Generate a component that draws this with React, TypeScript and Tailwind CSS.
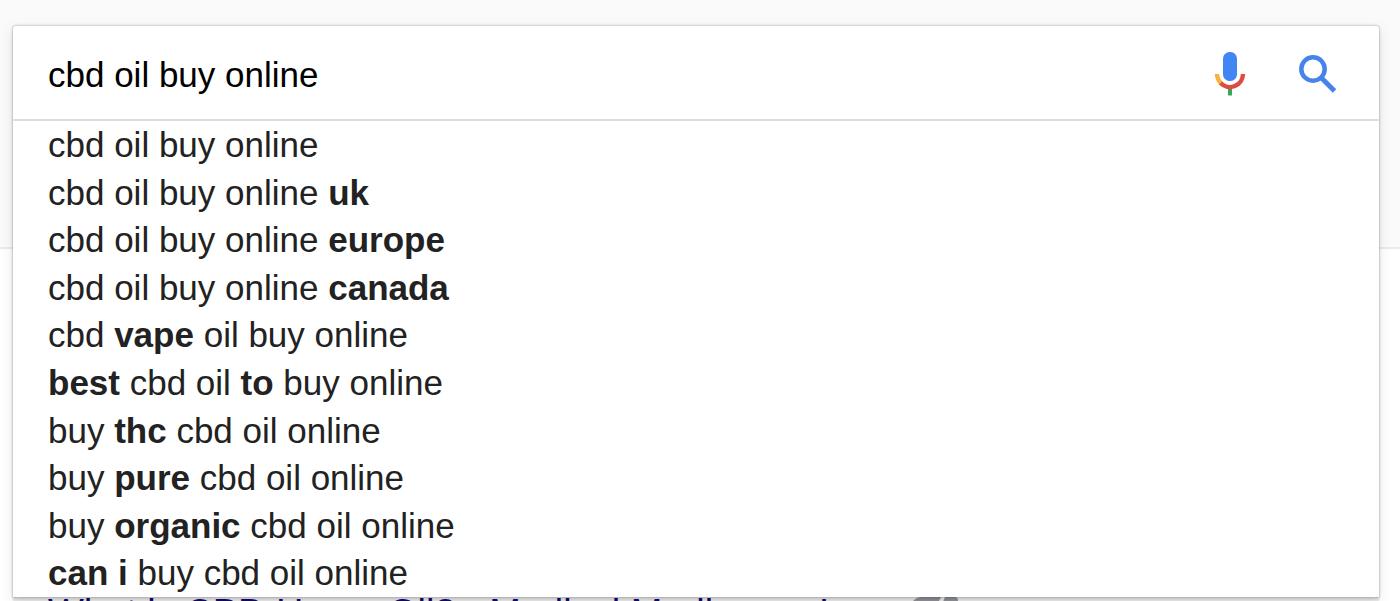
type Part = { text: string; bold?: boolean };

const query = "cbd oil buy online";

const suggestions: Part[][] = [
  [{ text: "cbd oil buy online" }],
  [{ text: "cbd oil buy online " }, { text: "uk", bold: true }],
  [{ text: "cbd oil buy online " }, { text: "europe", bold: true }],
  [{ text: "cbd oil buy online " }, { text: "canada", bold: true }],
  [{ text: "cbd " }, { text: "vape", bold: true }, { text: " oil buy online" }],
  [{ text: "best", bold: true }, { text: " cbd oil " }, { text: "to", bold: true }, { text: " buy online" }],
  [{ text: "buy " }, { text: "thc", bold: true }, { text: " cbd oil online" }],
  [{ text: "buy " }, { text: "pure", bold: true }, { text: " cbd oil online" }],
  [{ text: "buy " }, { text: "organic", bold: true }, { text: " cbd oil online" }],
  [{ text: "can i", bold: true }, { text: " buy cbd oil online" }],
];

function MicIcon() {
  return (
    <svg viewBox="0 0 32 44" className="h-[44px] w-[32px]" fill="none" aria-hidden="true">
      <rect x="9" y="0" width="14" height="29" rx="6.5" fill="#4285f4" />
      <path d="M16 36v7.500" stroke="#34a853" strokeWidth="4" />
      <path d="M3 22a13 13 0 0 0 4.400 9.500" stroke="#f4b43a" strokeWidth="4.400" />
      <path d="M6.600 31A13 13 0 0 0 29 22" stroke="#de4b40" strokeWidth="4.400" />
    </svg>
  );
}

function SearchIcon() {
  return (
    <svg viewBox="0 0 38 38" className="size-[38px]" fill="none" stroke="#4683ea" aria-hidden="true">
      <circle cx="14" cy="14" r="11.700" strokeWidth="4.500" />
      <path d="M23 23.500L35.500 36" strokeWidth="5" />
    </svg>
  );
}

function ResultBadge() {
  return (
    <svg viewBox="0 0 48 20" className="h-[20px] w-[48px]" fill="#9c9ca6" aria-hidden="true">
      <path d="M0 6C4 2 6 0 11 0H30L20 20H0Z" />
      <path d="M34 0H44Q47 0 47 4L40 20H26Z" />
    </svg>
  );
}

function SearchBox() {
  return (
    <form
      role="search"
      onSubmit={(e) => e.preventDefault()}
      className="flex h-[95px] items-center border-b-2 border-[#dcdcdc] pt-[2px] pr-[42px] pl-[35px]"
    >
      <input
        type="text"
        aria-label="Search"
        defaultValue={query}
        className="h-[50px] min-w-0 flex-1 bg-transparent pt-[2px] text-[35px] leading-[48px] text-black outline-none"
      />
      <button type="button" aria-label="Search by voice" className="mr-[53px] shrink-0">
        <MicIcon />
      </button>
      <button type="submit" aria-label="Search" className="shrink-0">
        <SearchIcon />
      </button>
    </form>
  );
}

function SuggestionList() {
  return (
    <ul className="grid h-[476px] auto-rows-fr px-[35px] text-[35px] leading-[47px] text-[#222]">
      {suggestions.map((parts, i) => (
        <li key={i} className="whitespace-pre">
          {parts.map((part, j) => (part.bold ? <b key={j}>{part.text}</b> : <span key={j}>{part.text}</span>))}
        </li>
      ))}
    </ul>
  );
}

export default function App() {
  return (
    <div className="relative h-screen overflow-hidden bg-white font-['Liberation_Sans',Arial,sans-serif]">
      <div className="h-[249px] border-b-2 border-[#ebebeb] bg-[#fafafa]" />

      {/* first result, mostly covered by the open suggestion panel */}
      <div className="absolute top-[591px] left-[48px] flex items-start gap-[42px] whitespace-nowrap">
        <a href="#result" className="text-[38px] leading-[44px] text-[#150a70]">
          What is CBD Hemp Oil? - Medical Marijuana, Inc
        </a>
        <div className="pt-[6px]">
          <ResultBadge />
        </div>
      </div>

      <main className="absolute inset-x-0 top-[26px] mr-[21px] ml-[13px] rounded-t-[3px] bg-white shadow-[0_0_2px_1px_rgba(0,0,0,0.16),0_4px_2px_rgba(0,0,0,0.12),0_4px_14px_rgba(0,0,0,0.1)]">
        <SearchBox />
        <SuggestionList />
      </main>
    </div>
  );
}
